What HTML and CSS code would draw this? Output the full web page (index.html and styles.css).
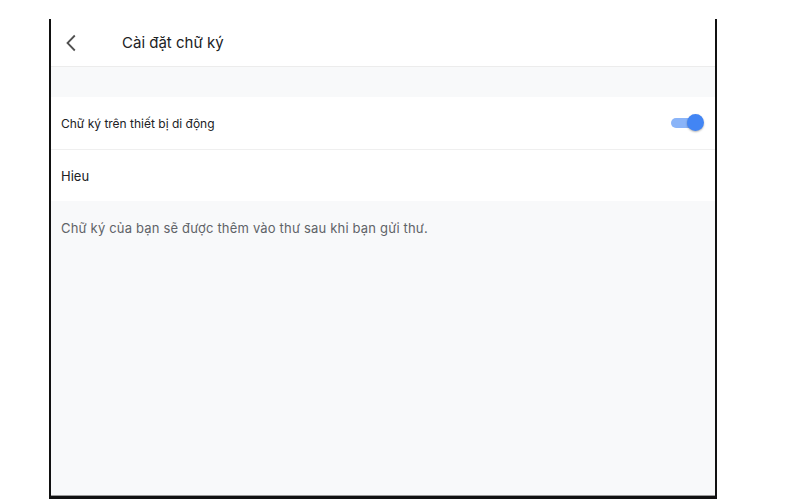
FILE: index.html
```html
<!DOCTYPE html>
<html lang="vi">
<head>
<meta charset="utf-8">
<link rel="stylesheet" href="styles.css">
</head>
<body>
<div class="frame">
  <div class="screen">
    <header class="header">
      <svg class="back" width="12" height="18" viewBox="0 0 12 18"><path d="M9.8 1.5 L2.5 9 L9.8 16.5" fill="none" stroke="#505050" stroke-width="1.8"/></svg>
      <span class="title">Cài đặt chữ ký</span>
    </header>
    <div class="band"></div>
    <div class="row row-toggle">
      <span class="label">Chữ ký trên thiết bị di động</span>
      <span class="switch"><span class="track"></span><span class="thumb"></span></span>
    </div>
    <div class="row row-name">
      <span class="name">Hieu</span>
    </div>
    <div class="footer">
      <p class="hint">Chữ ký của bạn sẽ được thêm vào thư sau khi bạn gửi thư.</p>
    </div>
  </div>
</div>
</body>
</html>
```

FILE: styles.css
```css
html, body {
  margin: 0;
  padding: 0;
  background: #ffffff;
  font-family: Inter, Roboto, "Noto Sans", "Liberation Sans", sans-serif;
  color: #202124;
}
.frame {
  margin-left: 49px;
  margin-top: 19px;
  width: 664px;
  height: 477px;
  border-left: 2px solid #111;
  border-right: 2px solid #111;
  border-bottom: 3px solid #111;
}
.screen {
  height: 476px;
  display: flex;
  flex-direction: column;
  background: #f8f9fa;
  border-bottom: 1px solid #9a9a9a;
}
.header {
  height: 47px;
  background: #fff;
  border-bottom: 1px solid #ececec;
  display: flex;
  align-items: center;
  flex-shrink: 0;
}
.back {
  margin-left: 14px;
  margin-top: 1px;
}
.title {
  margin-left: 45px;
  font-size: 15px;
  color: #202124;
}
.band {
  height: 30px;
  flex-shrink: 0;
}
.row {
  background: #fff;
  display: flex;
  align-items: center;
  padding-left: 10px;
  flex-shrink: 0;
}
.row-toggle {
  height: 52px;
  border-bottom: 1px solid #efefef;
  justify-content: space-between;
  padding-right: 11px;
}
.row-name {
  height: 51px;
}
.label {
  font-size: 12px;
}
.name {
  font-size: 13px;
}
.switch {
  position: relative;
  width: 33px;
  height: 18px;
}
.track {
  position: absolute;
  left: 0;
  top: 4px;
  width: 30px;
  height: 10px;
  border-radius: 5px;
  background: #8ab4f8;
}
.thumb {
  position: absolute;
  right: 0;
  top: 0;
  width: 17px;
  height: 17px;
  border-radius: 50%;
  background: #4285f4;
  box-shadow: 0 1px 2px rgba(0,0,0,0.3);
}
.footer {
  flex: 1;
  padding-left: 10px;
}
.hint {
  margin: 19px 0 0 0;
  font-size: 13px;
  letter-spacing: 0.18px;
  color: #5f6368;
}
```
